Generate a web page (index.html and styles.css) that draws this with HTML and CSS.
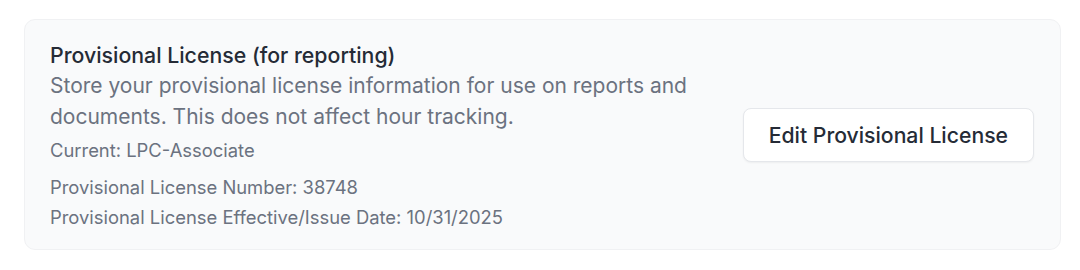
FILE: index.html
```html
<!DOCTYPE html>
<html lang="en">
<head>
<meta charset="utf-8">
<title>Provisional License</title>
<link rel="stylesheet" href="styles.css">
</head>
<body>
<div class="page">
  <section class="card">
    <div class="info">
      <h3 class="title">Provisional License (for reporting)</h3>
      <p class="desc">Store your provisional license information for use on reports and documents. This does not affect hour tracking.</p>
      <p class="meta current">Current: LPC-Associate</p>
      <p class="meta">Provisional License Number: 38748</p>
      <p class="meta">Provisional License Effective/Issue Date: 10/31/2025</p>
    </div>
    <button class="btn" type="button">Edit Provisional License</button>
  </section>
</div>
</body>
</html>
```
FILE: styles.css
```css
* { box-sizing: border-box; }
html, body { margin: 0; padding: 0; background: #ffffff; }
body {
  font-family: Inter, "Noto Sans", "Liberation Sans", sans-serif;
  -webkit-font-smoothing: antialiased;
}
.page {
  padding: 19px 19px 0 24px;
}
.card {
  display: flex;
  align-items: center;
  justify-content: space-between;
  background: #f9fafb;
  border: 1px solid #f0f1f3;
  border-radius: 11px;
  padding: 20px 26px 17px 25px;
}
.info { max-width: 670px; }
.title {
  margin: 0;
  font-size: 21.3px;
  line-height: 30px;
  font-weight: 500;
  color: #252b36;
}
.desc {
  margin: 0;
  font-size: 21px;
  line-height: 31px;
  color: #6b7280;
}
.meta {
  margin: 0;
  font-size: 18.4px;
  line-height: 30px;
  color: #6b7280;
}
.current { margin: 3px 0 7px; }
.btn {
  font-family: inherit;
  font-size: 21.2px;
  font-weight: 500;
  color: #252b36;
  background: #ffffff;
  border: 1px solid #e5e7eb;
  border-radius: 8px;
  height: 54px;
  padding: 0 25px;
  margin-bottom: 3px;
  box-shadow: 0 1px 2px rgba(0,0,0,0.05);
  cursor: pointer;
}
```
